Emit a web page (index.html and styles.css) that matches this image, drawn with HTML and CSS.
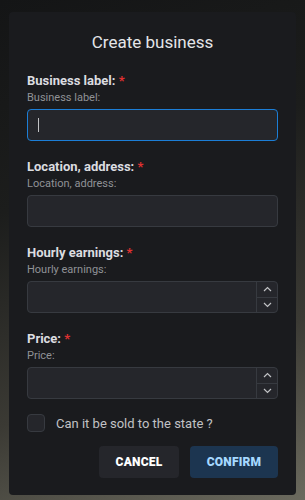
FILE: index.html
```html
<!DOCTYPE html>
<html lang="en">
<head>
    <meta charset="UTF-8">
    <meta name="viewport" content="width=device-width, initial-scale=1.0">
    <title>Create business</title>
    <link rel="stylesheet" href="styles.css">
</head>
<body>

    <div class="modal">
        <div class="modal-title">Create business</div>

        <div class="field">
            <label class="field-label">Business label: <span class="required">*</span></label>
            <div class="field-desc">Business label:</div>
            <div class="input focused"><span class="caret"></span></div>
        </div>

        <div class="field">
            <label class="field-label">Location, address: <span class="required">*</span></label>
            <div class="field-desc">Location, address:</div>
            <div class="input"></div>
        </div>

        <div class="field">
            <label class="field-label">Hourly earnings: <span class="required">*</span></label>
            <div class="field-desc">Hourly earnings:</div>
            <div class="input number">
                <div class="spinner">
                    <div class="spin-btn">
                        <svg width="9" height="6" viewBox="0 0 9 6"><path d="M1 5 L4.5 1.5 L8 5" fill="none" stroke="#c1c2c5" stroke-width="1.2"/></svg>
                    </div>
                    <div class="spin-btn">
                        <svg width="9" height="6" viewBox="0 0 9 6"><path d="M1 1 L4.5 4.5 L8 1" fill="none" stroke="#c1c2c5" stroke-width="1.2"/></svg>
                    </div>
                </div>
            </div>
        </div>

        <div class="field">
            <label class="field-label">Price: <span class="required">*</span></label>
            <div class="field-desc">Price:</div>
            <div class="input number">
                <div class="spinner">
                    <div class="spin-btn">
                        <svg width="9" height="6" viewBox="0 0 9 6"><path d="M1 5 L4.5 1.5 L8 5" fill="none" stroke="#c1c2c5" stroke-width="1.2"/></svg>
                    </div>
                    <div class="spin-btn">
                        <svg width="9" height="6" viewBox="0 0 9 6"><path d="M1 1 L4.5 4.5 L8 1" fill="none" stroke="#c1c2c5" stroke-width="1.2"/></svg>
                    </div>
                </div>
            </div>
        </div>

        <div class="check-row">
            <div class="checkbox"></div>
            <span>Can it be sold to the state ?</span>
        </div>

        <div class="actions">
            <button class="btn btn-cancel">CANCEL</button>
            <button class="btn btn-confirm">CONFIRM</button>
        </div>
    </div>

</body>
</html>
```

FILE: styles.css
```css
html, body {
    margin: 0;
    height: 100%;
}

body {
    font-family: Roboto, "Liberation Sans", sans-serif;
    background: linear-gradient(160deg, #141516 0%, #1c1d1c 35%, #3b3a34 70%, #6b6a5e 100%);
    padding: 12px 9px 0;
    box-sizing: border-box;
}

.modal {
    width: 287px;
    box-sizing: border-box;
    background-color: #1a1b1e;
    border-radius: 4px;
    padding: 18px 18px 17px;
}

.modal-title {
    text-align: center;
    color: #e4e5e8;
    font-size: 17px;
    line-height: 24px;
    margin-bottom: 18px;
}

.field {
    margin-bottom: 17px;
}

.field-label {
    display: block;
    color: #dcdde0;
    font-size: 13px;
    font-weight: 700;
    line-height: 18px;
}

.required {
    color: #e03131;
}

.field-desc {
    color: #909296;
    font-size: 11px;
    line-height: 14px;
    margin-top: 1px;
}

.input {
    margin-top: 4px;
    height: 32px;
    box-sizing: border-box;
    background-color: #25262b;
    border: 1px solid #373a40;
    border-radius: 4px;
    display: flex;
    align-items: center;
    justify-content: flex-end;
}

.input.focused {
    border-color: #1c7ed6;
    justify-content: flex-start;
    padding-left: 10px;
}

.caret {
    width: 1px;
    height: 14px;
    background-color: #c1c2c5;
}

.spinner {
    width: 20px;
    height: 100%;
    border-left: 1px solid #373a40;
    display: flex;
    flex-direction: column;
}

.spin-btn {
    flex: 1;
    display: flex;
    align-items: center;
    justify-content: center;
}

.spin-btn + .spin-btn {
    border-top: 1px solid #373a40;
}

.check-row {
    display: flex;
    align-items: center;
    gap: 11px;
    color: #c1c2c5;
    font-size: 13px;
    margin-top: -2px;
}

.checkbox {
    width: 18px;
    height: 18px;
    box-sizing: border-box;
    background-color: #25262b;
    border: 1px solid #373a40;
    border-radius: 4px;
}

.actions {
    display: flex;
    justify-content: flex-end;
    gap: 11px;
    margin-top: 14px;
}

.btn {
    height: 32px;
    border: none;
    border-radius: 4px;
    font-family: Roboto, "Liberation Sans", sans-serif;
    font-size: 12px;
    font-weight: 900;
    letter-spacing: 0.2px;
}

.btn-cancel {
    width: 80px;
    background-color: #25262b;
    color: #ffffff;
}

.btn-confirm {
    width: 88px;
    background-color: #1c3550;
    color: #a5d8ff;
}
```
